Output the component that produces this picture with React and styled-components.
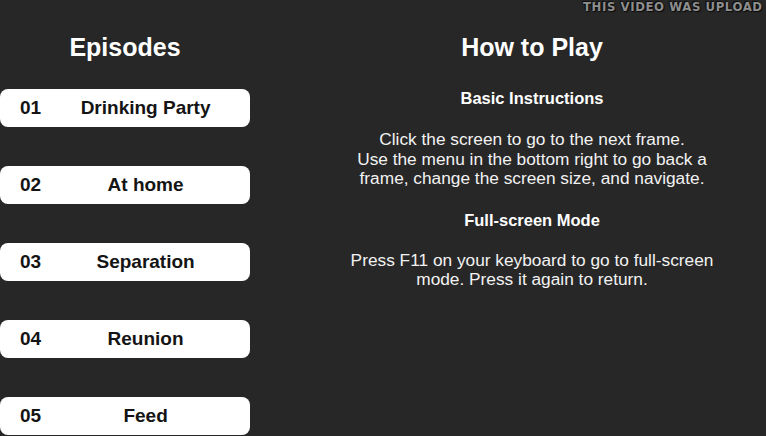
import React from "react";
import styled, { createGlobalStyle } from "styled-components";

const Global = createGlobalStyle`
  html, body { margin: 0; padding: 0; background: #272727; }
  body { font-family: "Liberation Sans", Arial, sans-serif; overflow: hidden; }
`;

const Page = styled.div`
  position: relative;
  width: 766px;
  height: 436px;
  overflow: hidden;
  background: #272727;
  display: grid;
  grid-template-columns: 250px 1fr;
  column-gap: 48px;
  padding-top: 33px;
  box-sizing: border-box;
  color: #fff;
`;

const Column = styled.div`
  display: flex;
  flex-direction: column;
  align-items: stretch;
  text-align: center;
`;

const Heading = styled.h1`
  margin: 0;
  font-size: 25px;
  line-height: 29px;
  font-weight: 700;
  color: #fff;
`;

const EpisodeList = styled.div`
  display: flex;
  flex-direction: column;
  gap: 39px;
  margin-top: 27px;
`;

const EpisodeButton = styled.div`
  display: flex;
  align-items: center;
  height: 38px;
  background: #fff;
  border-radius: 8px;
  padding-left: 20px;
  color: #141414;
  font-size: 19px;
  font-weight: 700;
`;

const Num = styled.span`
  flex: none;
`;

const Label = styled.span`
  flex: 1;
  text-align: center;
`;

const SubHeading = styled.h2`
  margin: ${(p) => p.$top}px 0 0;
  font-size: 16.5px;
  line-height: 18px;
  font-weight: 700;
`;

const Body = styled.p`
  margin: ${(p) => p.$top}px 0 0;
  font-size: 17.3px;
  line-height: 19.5px;
  color: #f2f2f2;
`;

const Watermark = styled.div`
  position: absolute;
  top: 0;
  left: 583px;
  line-height: 14px;
  white-space: nowrap;
  font-family: "DejaVu Sans Condensed", "DejaVu Sans", sans-serif;
  font-weight: 700;
  font-size: 13px;
  letter-spacing: 0.6px;
  color: #8e8e8e;
  text-shadow: 0 0 1px #0c0c0c, 1px 1px 1px #0c0c0c, -1px -1px 1px #0c0c0c;
`;

const episodes = [
  ["01", "Drinking Party"],
  ["02", "At home"],
  ["03", "Separation"],
  ["04", "Reunion"],
  ["05", "Feed"],
];

export default function App() {
  return (
    <>
      <Global />
      <Page>
        <Column>
          <Heading>Episodes</Heading>
          <EpisodeList>
            {episodes.map(([n, t]) => (
              <EpisodeButton key={n}>
                <Num>{n}</Num>
                <Label>{t}</Label>
              </EpisodeButton>
            ))}
          </EpisodeList>
        </Column>
        <Column>
          <Heading>How to Play</Heading>
          <SubHeading $top={27}>Basic Instructions</SubHeading>
          <Body $top={23}>
            Click the screen to go to the next frame.
            <br />
            Use the menu in the bottom right to go back a
            <br />
            frame, change the screen size, and navigate.
          </Body>
          <SubHeading $top={22}>Full-screen Mode</SubHeading>
          <Body $top={22}>
            Press F11 on your keyboard to go to full-screen
            <br />
            mode. Press it again to return.
          </Body>
        </Column>
        <Watermark>THIS VIDEO WAS UPLOAD</Watermark>
      </Page>
    </>
  );
}
